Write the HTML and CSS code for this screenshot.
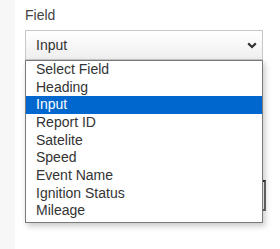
FILE: index.html
```html
<!DOCTYPE html>
<html lang="en">
<head>
  <meta charset="UTF-8" />
  <meta name="viewport" content="width=device-width, initial-scale=1.0"/>
  <title>Field</title>
  <link rel="stylesheet" href="styles.css">
</head>
<body>
  <div class="page">
    <aside class="side"></aside>

    <main class="content">
      <label class="field-label">Field</label>

      <div class="select-wrap">
        <div class="select">
          <span>Input</span>
          <svg class="chevron" width="10" height="7" viewBox="0 0 10 7">
            <path d="M1.2 1.4 L5 5 L8.8 1.4" fill="none" stroke="#333" stroke-width="2.2"/>
          </svg>
        </div>

        <!-- open dropdown -->
        <ul class="options">
          <li>Select Field</li>
          <li>Heading</li>
          <li class="active">Input</li>
          <li>Report ID</li>
          <li>Satelite</li>
          <li>Speed</li>
          <li>Event Name</li>
          <li>Ignition Status</li>
          <li>Mileage</li>
        </ul>
      </div>

      <div class="actions">
        <span class="btn"></span>
      </div>
    </main>
  </div>
</body>
</html>
```

FILE: styles.css
```css
body {
  margin: 0;
  font-family: "Liberation Sans", Arial, sans-serif;
  background: #fff;
}

.page {
  display: flex;
  min-height: 100vh;
}

.side {
  width: 15px;
  flex-shrink: 0;
  background: #f7f7f7;
}

.content {
  flex: 1;
  padding: 7px 17px 0 10px;
}

.field-label {
  display: block;
  font-size: 14px;
  line-height: 16px;
  color: #444;
  margin-bottom: 7px;
}

.select-wrap {
  position: relative;
}

.select {
  height: 28px;
  border: 1px solid #c8c8c8;
  background: linear-gradient(#fff, #efefef);
  display: flex;
  align-items: center;
  justify-content: space-between;
  padding: 0 5px 0 10px;
  font-size: 14px;
  color: #333;
}

.chevron {
  display: block;
}

.options {
  position: absolute;
  top: 100%;
  left: 0;
  right: 0;
  z-index: 2;
  margin: 0;
  padding: 0 0 2px;
  list-style: none;
  background: #fff;
  border: 1px solid #7a7a7a;
  box-shadow: 2px 3px 6px rgba(0, 0, 0, 0.22);
}

.options li {
  height: 17.67px;
  line-height: 17.67px;
  padding-left: 10px;
  font-size: 14px;
  color: #333;
  white-space: nowrap;
}

.options li.active {
  background: #0067ce;
  color: #fff;
}

.actions {
  display: flex;
  justify-content: flex-end;
  margin: 120px -3px 0 0;
}

.btn {
  display: block;
  width: 90px;
  height: 27px;
  border: 2px solid #6a6a6a;
  border-top-color: #2e2e2e;
  background: #fff;
}
```
